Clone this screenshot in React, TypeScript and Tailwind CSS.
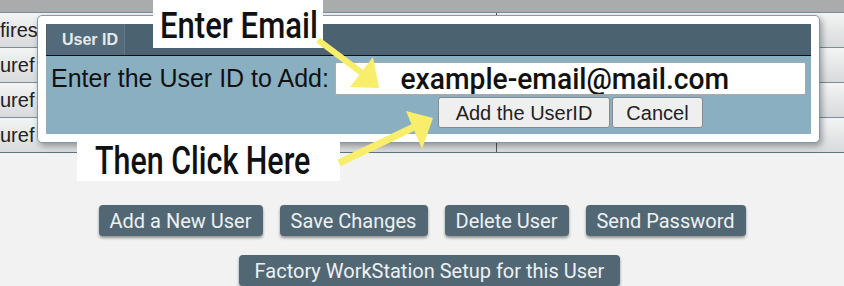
import React from "react";

const rows = ["fires", "uref", "uref", "uref"];

const actions = [
  { label: "Add a New User", w: "w-[164px]" },
  { label: "Save Changes", w: "w-[148px]" },
  { label: "Delete User", w: "w-[124px]" },
  { label: "Send Password", w: "w-[160px]" },
];

function Arrows() {
  return (
    <svg className="pointer-events-none absolute left-0 top-0" width={844} height={286}>
      <g fill="#f8ee6b" stroke="#f8ee6b" strokeLinecap="butt">
        <line x1={318} y1={40} x2={366} y2={76} strokeWidth={6} />
        <polygon points="379,88 373,57 350,87" stroke="none" />
        <line x1={339} y1={163} x2={414} y2={127} strokeWidth={7} />
        <polygon points="433,118 406,111 422,149" stroke="none" />
      </g>
    </svg>
  );
}

function AddUserDialog() {
  return (
    <div className="absolute left-[37px] top-[15px] flex h-[128px] w-[783px] flex-col rounded-[5px] border border-[#7f9cad] bg-white p-[8px] shadow-[2px_3px_6px_rgba(0,0,0,0.35)]">
      <div className="flex h-[32px] shrink-0 border-b border-[#111] bg-[#4b6371]">
        <div className="ml-[1px] flex w-[78px] items-center border-r border-[#5f7787] bg-[#526a7a] pl-[15px] text-[16px] font-bold text-[#e4eaee]">
          User ID
        </div>
      </div>
      <div className="flex-1 bg-[#8aafc1] px-[5px] pt-[6px]">
        <div className="flex h-[33px] items-center">
          <span className="text-[25px] leading-none text-[#111]">Enter the User ID to Add:</span>
          <div className="ml-auto flex h-[33px] w-[471px] items-center justify-center overflow-hidden rounded-[2px] border border-[#a9a9a9] bg-white">
            <span className="inline-block -translate-x-[6px] scale-x-[0.94] font-['Roboto',sans-serif] text-[30px] font-medium leading-none text-[#111]">
              example-email@mail.com
            </span>
          </div>
        </div>
        <div className="ml-auto mt-[2px] flex w-[471px] justify-center gap-[2px]">
          <button className="h-[31px] w-[172px] rounded-[3px] border border-[#8a8a8a] bg-[#efefef] text-[20px] text-[#222]">
            Add the UserID
          </button>
          <button className="h-[31px] w-[91px] rounded-[3px] border border-[#8a8a8a] bg-[#efefef] text-[20px] text-[#222]">
            Cancel
          </button>
        </div>
      </div>
    </div>
  );
}

export default function App() {
  return (
    <div className="relative h-[286px] w-[844px] overflow-hidden bg-[#f2f2f2] font-['Liberation_Sans',Arial,sans-serif]">
      <div className="h-[12px] bg-[#a9abad]" />
      <div className="border-b border-[#5f7482]">
        {rows.map((r, i) => (
          <div
            key={i}
            className="grid h-[35px] grid-cols-[497px_1fr] border-t border-[#7a8d99] bg-gradient-to-b from-[#f3f4f4] to-[#d8dadb]"
          >
            <div className="flex items-center border-r border-[#555] text-[20px] text-[#222]">
              <span>{r}</span>
            </div>
            <div />
          </div>
        ))}
      </div>

      <div className="mt-[52px] flex justify-center gap-[17px]">
        {actions.map((a) => (
          <button
            key={a.label}
            className={`${a.w} h-[31px] rounded-[4px] bg-[#516874] font-['Roboto',sans-serif] text-[20px] text-[#eef1f3] shadow-[0_2px_3px_rgba(0,0,0,0.4)]`}
          >
            {a.label}
          </button>
        ))}
      </div>
      <div className="mt-[19px] flex justify-center pl-[15px]">
        <button className="h-[31px] w-[381px] rounded-[4px] bg-[#516874] font-['Roboto',sans-serif] text-[20px] text-[#eef1f3] shadow-[0_2px_3px_rgba(0,0,0,0.4)]">
          Factory WorkStation Setup for this User
        </button>
      </div>

      <AddUserDialog />

      <div className="absolute left-[153px] top-0 flex h-[48px] w-[170px] items-center bg-white pl-[7px] pt-[3px]">
        <span className="inline-block origin-left scale-x-[0.84] whitespace-nowrap font-['Roboto',sans-serif] text-[37px] font-medium leading-none text-[#111]">
          Enter Email
        </span>
      </div>
      <div className="absolute left-[77px] top-[140px] flex h-[41px] w-[263px] items-center bg-white pl-[18px]">
        <span className="inline-block origin-left scale-x-[0.8] whitespace-nowrap font-['Roboto',sans-serif] text-[38px] font-medium leading-none text-[#111]">
          Then Click Here
        </span>
      </div>

      <Arrows />
    </div>
  );
}
